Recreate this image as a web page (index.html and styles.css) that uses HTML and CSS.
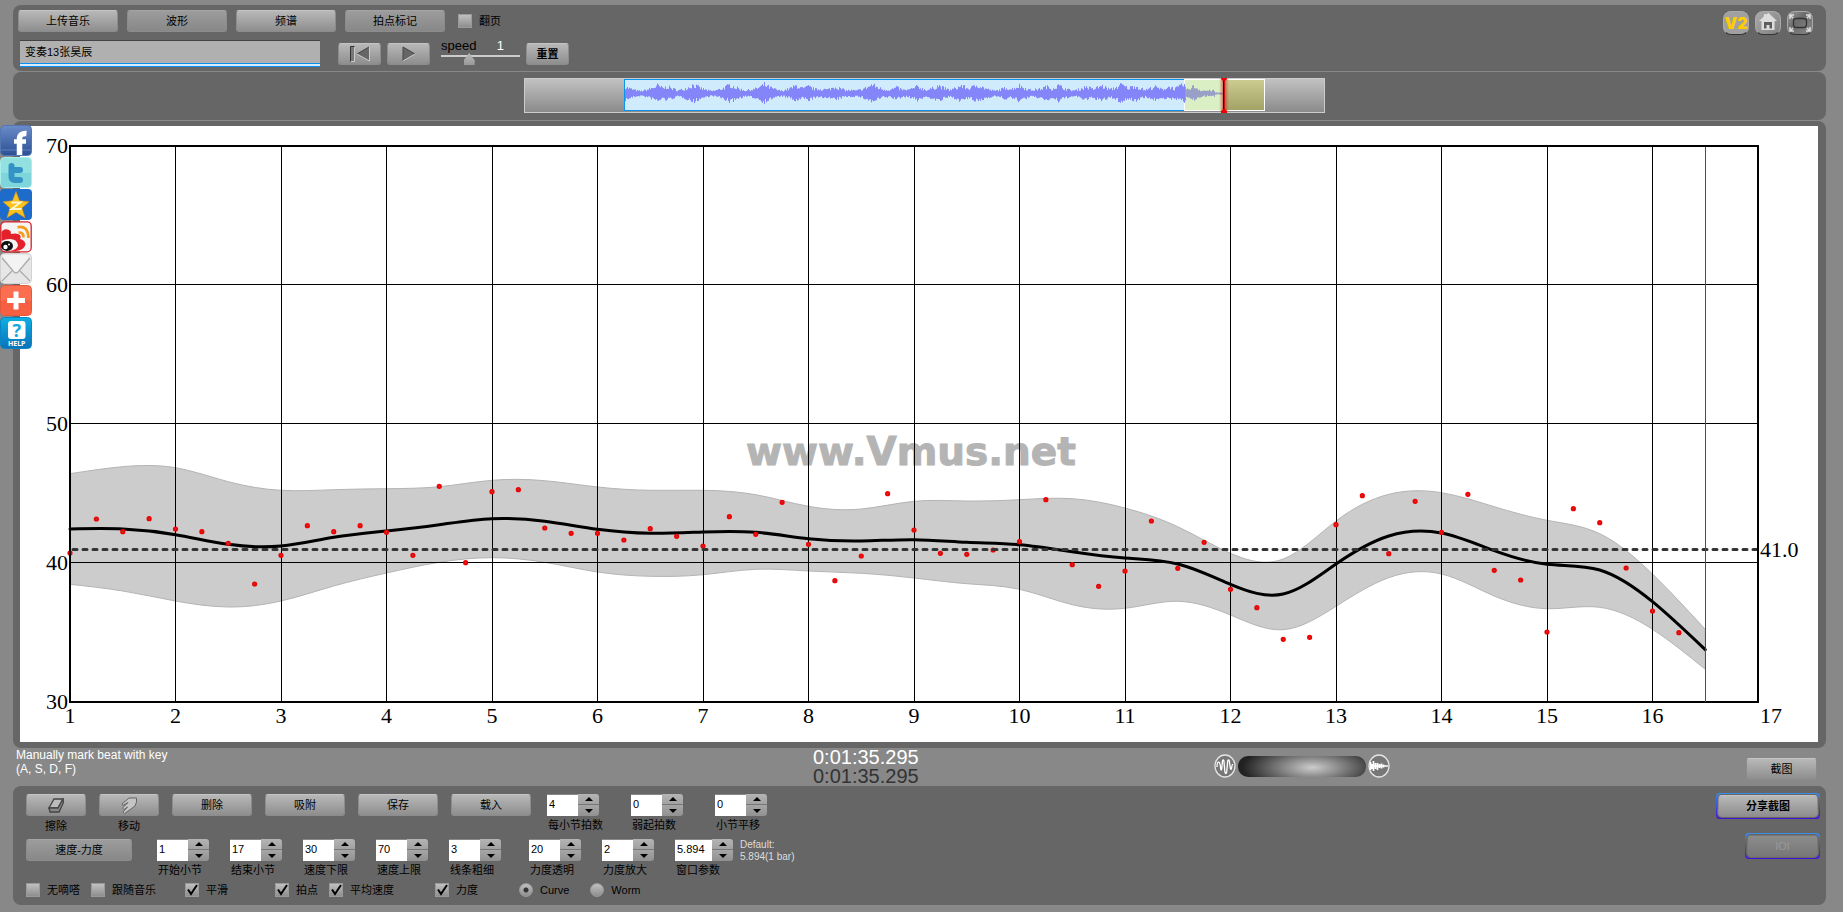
FILE: index.html
```html
<!DOCTYPE html>
<html lang="zh-CN">
<head>
<meta charset="utf-8">
<title>Vmus.net</title>
<link rel="stylesheet" href="styles.css">
</head>
<body>
<header class="panel toolbar">
  <div class="toolbar-main">
    <div class="row tabs">
      <button class="btn w100">上传音乐</button>
      <button class="btn w100 pressed">波形</button>
      <button class="btn w100">频谱</button>
      <button class="btn w100 pressed">拍点标记</button>
      <label class="check"><input type="checkbox"><span>翻页</span></label>
    </div>
    <div class="row player">
      <input class="track-name" type="text" value="变奏13张昊辰" aria-label="曲目">
      <button class="btn w43" aria-label="返回开头">
        <svg width="20" height="16" viewBox="0 0 20 16"><path fill="#777" d="M.5 .5h4v15h-4z"/><path d="M.5 15.500V.5h4" stroke="#333" fill="none"/><path fill="#666" d="M19 1v14L7 8z"/><path d="M19 1 7 8" stroke="#444"/><path d="M4.500 1v14.500H1M7 8l12.500 7V1" stroke="#ccc" fill="none"/></svg>
      </button>
      <button class="btn w43" aria-label="播放">
        <svg width="14" height="16" viewBox="0 0 14 16"><path fill="#666" d="M1 1v14l12-7z"/><path d="M13 8 1 1v14" stroke="#444" fill="none"/><path d="m1 15 12-7" stroke="#ccc"/></svg>
      </button>
      <div class="speed">
        <div class="speed-head"><label for="speed">speed</label><output for="speed">1</output></div>
        <input id="speed" type="range" min="0" max="3" step="0.1" value="1">
      </div>
      <button class="btn w43 strong">重置</button>
    </div>
  </div>
  <div class="toolbar-links">
    <a class="tile v2" href="#">V2</a>
    <a class="tile" href="#" aria-label="Home"><svg viewBox="0 0 26 24"><path fill="#ddd" d="M13 1.500 22 10h-2.500v9h-13v-9H4l5-4.700V3h2.500v1z"/><path fill="#5c5c5c" d="M9 17.500V11h8v6.500h-2.500V14h-3v3.500z"/></svg></a>
    <a class="tile dim" href="#" aria-label="Fullscreen"><svg viewBox="0 0 26 24" fill="none"><rect x="6.500" y="7.500" width="13" height="9" rx="3" stroke="#333" stroke-width="1.300"/><path stroke="#ddd" stroke-width="1.500" d="M3 8V4h4M3 4l3 3M19 4h4v4m0-4-3 3M3 16v4h4m-4 0 3-3m13 3h4v-4m0 4-3-3"/></svg></a>
  </div>
</header>

<section class="panel overview-panel">
  <svg id="overview" class="overview" viewBox="0 0 801 35" role="img" aria-label="波形">
    <defs>
      <linearGradient id="gGray" x2="0" y2="1"><stop stop-color="#c2c2c2"/><stop offset="1" stop-color="#8a8a8a"/></linearGradient>
      <linearGradient id="gOlive" x2="0" y2="1"><stop stop-color="#cccc92"/><stop offset="1" stop-color="#a2a266"/></linearGradient>
      <linearGradient id="gRed" x2="1" y2="0"><stop stop-color="#d44" stop-opacity="0"/><stop offset=".5" stop-color="#b22"/><stop offset="1" stop-color="#d44" stop-opacity="0"/></linearGradient>
    </defs>
    <rect x=".5" y=".5" width="800" height="34" fill="url(#gGray)" stroke="#ccc"/>
    <rect x="100.500" y="1.500" width="560" height="31" fill="#cfebfc" stroke="#0a94f0"/>
    <rect x="660.500" y="1.500" width="80" height="31" fill="url(#gOlive)" stroke="#fff"/>
    <rect x="661" y="2" width="40" height="30" fill="#daf0c4"/>
    <path id="wave" fill="none" stroke="#8585fa"/>
    <path id="waveTail" fill="none" stroke="#98a0c8"/>
    <rect x="695" y="1" width="10" height="32" fill="url(#gRed)" opacity=".75"/>
    <path stroke="#111" d="M699.500 1v32"/><path stroke="#c11" d="M700.500 1v32"/>
    <path fill="#e00" d="M697 0h6v1l-2 2h-2l-2-2zM697 35h6v-2l-2-2h-2l-2 2z"/>
  </svg>
</section>

<main class="panel chart-panel">
  <nav class="social">
    <a href="#" aria-label="Facebook"><svg viewBox="0 0 32 32"><defs><linearGradient id="fb" x2="0" y2="1"><stop stop-color="#6b8cc8"/><stop offset="1" stop-color="#2c4f94"/></linearGradient></defs><rect x=".5" y=".5" width="31" height="30" rx="4" fill="url(#fb)" stroke="#5376b4"/><path d="M1 25h30" stroke="#5d80bf"/><path fill="none" stroke="#fff" stroke-width="5.500" d="M19.500 30V14q0-6 7-5.500"/><path stroke="#fff" stroke-width="4.500" d="M14 16.500h12"/></svg></a>
    <a href="#" aria-label="Twitter"><svg viewBox="0 0 32 32"><rect x=".5" y=".5" width="31" height="30" rx="4" fill="#93e0e0" stroke="#a8efec"/><path d="M1 16h30v11q0 3-3 3H4q-3 0-3-3z" fill="#7fd6da"/><path fill="none" stroke="#3592c5" stroke-width="6" stroke-linecap="round" stroke-linejoin="round" d="M11.500 9v10.500q0 3.500 3.500 3.500h5M12 13h8"/></svg></a>
    <a href="#" aria-label="QZone"><svg viewBox="0 0 32 32"><rect y="0" width="32" height="31" rx="4" fill="#1d6ccb"/><path fill="#fbc21c" stroke="#d98c12" stroke-width=".6" d="m16 2.500 3.500 9.200 9.500 1-7 6.200 3 9.800-9-5.500-9 5.500 3-9.800-7-6.200 9.500-1z"/><path d="M11.500 13.500h9l-9 6.500h10" fill="none" stroke="#fff8d0" stroke-width="1.800"/></svg></a>
    <a href="#" aria-label="Weibo"><svg viewBox="0 0 32 32"><rect x=".8" y=".8" width="30.400" height="30" rx="4" fill="#f4f4f4" stroke="#d8202a" stroke-width="1.300"/><path fill="#e4202a" d="M1.500 20V11q1-2 3-2.500 3-1 6 1.500l.5 3q6-1.500 9 1 1.500 2 0 4 5 1 5.500 5.500Q24 29 16 30H9q9-1 9-6-1-6-8-6-5 0-8.500 2z"/><ellipse cx="7" cy="25" rx="6" ry="5" fill="#111"/><circle cx="5.500" cy="26" r="2.200" fill="#fff"/><circle cx="9" cy="23.500" r="1" fill="#fff"/><path fill="none" stroke="#f59a1a" stroke-width="2.600" d="M17.500 6.200Q28 4 28.500 17M18.500 11.500q5-.5 5 5"/></svg></a>
    <a href="#" aria-label="Mail"><svg viewBox="0 0 32 32"><rect x=".5" y=".5" width="31" height="30" rx="4" fill="#e6e6e6" stroke="#d2d2d2"/><path fill="#f3f3f3" d="M2 2h28L17 20h-2z"/><path fill="none" stroke="#aaa" stroke-width="1.200" d="m2 5 12 14q2 2 4 0L30 5M2 28l10-10m18 10-10-10"/></svg></a>
    <a href="#" aria-label="Share"><svg viewBox="0 0 32 32"><rect x=".5" y=".5" width="31" height="30" rx="4" fill="#fb6e50" stroke="#e4583c"/><path d="M1 16Q16 12 31 16v11q0 3-3 3H4q-3 0-3-3z" fill="#f65f42"/><path d="M16 6.500v18M7 15.500h18" stroke="#fff" stroke-width="5"/></svg></a>
    <a href="#" aria-label="Help"><svg viewBox="0 0 32 32"><defs><linearGradient id="hp" x2="0" y2="1"><stop stop-color="#0cb0e4"/><stop offset="1" stop-color="#0b72b8"/></linearGradient></defs><rect x=".5" y=".5" width="31" height="31" rx="4" fill="url(#hp)" stroke="#0a86c8"/><rect x="8" y="4" width="17.500" height="18" rx="3" fill="#fff"/><text class="help-mark" x="16.700" y="19.500" text-anchor="middle">?</text><text class="help-word" x="16.700" y="29" text-anchor="middle">HELP</text></svg></a>
  </nav>
  <svg id="chart" class="chart" viewBox="20 126 1798 616" role="img" aria-label="速度-力度">
    <path id="band" fill="#ccc" stroke="#b4b4b4"/>
    <text class="watermark" x="911" y="465" text-anchor="middle">www.Vmus.net</text>
    <path id="mean" fill="none" stroke="#000" stroke-width="3" stroke-linecap="round"/>
    <g id="grid" stroke="#000" shape-rendering="crispEdges"></g>
    <g id="dots"></g>
    <path stroke="#333" stroke-width="3" stroke-dasharray="4 6" stroke-linecap="round" d="M73 549.500H1757"/>
    <rect x="70" y="146" width="1688" height="556" fill="none" stroke="#000" stroke-width="2" shape-rendering="crispEdges"/>
    <path stroke="#e01010" d="M1705.500 147v555"/>
    <g id="labels" class="axis"></g>
    <text class="axis" x="1760" y="557">41.0</text>
  </svg>
</main>

<section class="status">
  <p class="hint">Manually mark beat with key<br>(A, S, D, F)</p>
  <div class="clock"><time>0:01:35.295</time><time class="echo">0:01:35.295</time></div>
  <div class="volume">
    <svg width="22" height="24" viewBox="0 0 22 24" fill="none" stroke="#e4e4e4"><ellipse cx="11" cy="12" rx="10" ry="11" fill="#777" stroke-width="1.300"/><path stroke="#fff" stroke-width="1.300" d="M3 13q0-5 1.500-5t2 5 1.200 2L8.500 7q.7-2 1.400 0l1 11q.9 3 1.800 0l1-11q.8-2 1.600 0l1 7q1 3 1.500-1 .2-3 1.200-2"/></svg>
    <input type="range" aria-label="音量">
    <svg width="22" height="24" viewBox="0 0 22 24"><ellipse cx="11" cy="12" rx="10" ry="11" fill="#777" stroke="#e4e4e4" stroke-width="1.300"/><path stroke="#fff" d="M2.500 8v8M4 10v5M5.500 7v10M7.500 9v6M9.500 9v7M11.500 10v4M13.500 9.500v5M15.500 10.500v3M2 12h18" stroke-width="1.700"/></svg>
  </div>
  <button class="btn w71">截图</button>
</section>

<footer class="panel controls">
  <div class="control-rows">
    <div class="row tools">
      <div class="tool"><button class="btn w60" id="erase" aria-label="擦除"><svg width="18" height="15" viewBox="0 0 18 15"><path fill="#bbb" stroke="#444" stroke-width="1.300" d="M7 1h9l-5 9H2z"/><path fill="#888" stroke="#444" stroke-width="1.300" d="M2 10h9l5-9 .5 3.500L12 14H3z"/></svg></button><label for="erase">擦除</label></div>
      <div class="tool"><button class="btn w60" id="move" aria-label="移动"><svg width="18" height="17" viewBox="0 0 18 17"><path fill="#c4c4c4" stroke="#666" d="M16.500 1H9L2 7l1 1.500L8 5.500 2.500 11 4 12.500 7.500 10 3 15l1.500 1.500L11 12l4-3 1.500-4z"/></svg></button><label for="move">移动</label></div>
      <button class="btn w80">删除</button>
      <button class="btn w80">吸附</button>
      <button class="btn w80">保存</button>
      <button class="btn w80">载入</button>
      <div class="fields loose">
        <div class="field"><div class="stepper"><input type="text" id="f1" value="4"><button class="up" aria-label="+"></button><button class="down" aria-label="-"></button></div><label for="f1">每小节拍数</label></div>
        <div class="field"><div class="stepper"><input type="text" id="f2" value="0"><button class="up" aria-label="+"></button><button class="down" aria-label="-"></button></div><label for="f2">弱起拍数</label></div>
        <div class="field"><div class="stepper"><input type="text" id="f3" value="0"><button class="up" aria-label="+"></button><button class="down" aria-label="-"></button></div><label for="f3">小节平移</label></div>
      </div>
    </div>
    <div class="row params">
      <button class="btn w106 pressed">速度-力度</button>
      <div class="fields">
        <div class="field"><div class="stepper"><input type="text" id="f4" value="1"><button class="up" aria-label="+"></button><button class="down" aria-label="-"></button></div><label for="f4">开始小节</label></div>
        <div class="field"><div class="stepper"><input type="text" id="f5" value="17"><button class="up" aria-label="+"></button><button class="down" aria-label="-"></button></div><label for="f5">结束小节</label></div>
        <div class="field"><div class="stepper"><input type="text" id="f6" value="30"><button class="up" aria-label="+"></button><button class="down" aria-label="-"></button></div><label for="f6">速度下限</label></div>
        <div class="field"><div class="stepper"><input type="text" id="f7" value="70"><button class="up" aria-label="+"></button><button class="down" aria-label="-"></button></div><label for="f7">速度上限</label></div>
        <div class="field"><div class="stepper"><input type="text" id="f8" value="3"><button class="up" aria-label="+"></button><button class="down" aria-label="-"></button></div><label for="f8">线条粗细</label></div>
      </div>
      <div class="fields">
        <div class="field"><div class="stepper"><input type="text" id="f9" value="20"><button class="up" aria-label="+"></button><button class="down" aria-label="-"></button></div><label for="f9">力度透明</label></div>
        <div class="field"><div class="stepper"><input type="text" id="f10" value="2"><button class="up" aria-label="+"></button><button class="down" aria-label="-"></button></div><label for="f10">力度放大</label></div>
        <div class="field wide"><div class="stepper"><input type="text" id="f11" value="5.894"><button class="up" aria-label="+"></button><button class="down" aria-label="-"></button></div><label for="f11">窗口参数</label></div>
      </div>
      <p class="default">Default:<br>5.894(1 bar)</p>
    </div>
    <div class="row options">
      <label class="check"><input type="checkbox"><span>无嘀嗒</span></label>
      <label class="check"><input type="checkbox"><span>跟随音乐</span></label>
      <label class="check gap-m"><input type="checkbox" checked><span>平滑</span></label>
      <label class="check gap-l"><input type="checkbox" checked><span>拍点</span></label>
      <label class="check"><input type="checkbox" checked><span>平均速度</span></label>
      <label class="check gap-n"><input type="checkbox" checked><span>力度</span></label>
      <label class="check gap-n"><input type="radio" name="style" checked><span>Curve</span></label>
      <label class="check gap-s"><input type="radio" name="style"><span>Worm</span></label>
    </div>
  </div>
  <div class="share">
    <div class="glow"><button class="btn w100 strong">分享截图</button></div>
    <div class="glow"><button class="btn w71 off" disabled>IOI</button></div>
  </div>
</footer>
<script src="script.js"></script>
</body>
</html>
```

FILE: styles.css
```css
* { box-sizing: border-box; }

body {
  margin: 0;
  padding: 5px 17px 7px 13px;
  background: #888;
  color: #000;
  font: 11px/14px "Liberation Sans", "Noto Sans CJK SC", sans-serif;
}

button, input, output { font: inherit; color: inherit; }
p { margin: 0; }
a { color: inherit; text-decoration: none; }

.panel { background: #666; border-radius: 8px; }
.row { display: flex; }

/* Buttons */
.btn {
  display: flex;
  align-items: center;
  justify-content: center;
  flex: none;
  height: 22px;
  padding: 0;
  border: 1px solid #8c8c8c;
  border-top-color: #c4c4c4;
  border-radius: 3px;
  background: linear-gradient(#b8b8b8, #8e8e8e);
}
.pressed { background: linear-gradient(#9c9c9c, #888); border-color: #8c8c8c; border-top-color: #a4a4a4; }
.strong { font-weight: bold; }
.off { background: linear-gradient(#8c8c8c, #777); border-color: #777; color: #999; }
.w43 { width: 43px; }
.w60 { width: 60px; }
.w71 { width: 71px; }
.w80 { width: 80px; }
.w100 { width: 100px; }
.w106 { width: 106px; }

/* Check boxes and radios */
.check { display: flex; align-items: center; gap: 7px; white-space: nowrap; }
.check input {
  appearance: none;
  flex: none;
  width: 14px;
  height: 14px;
  margin: 0;
  border: 1px solid #9a9a9a;
  background: linear-gradient(#c0c0c0, #8e8e8e);
}
.check input[type="checkbox"]:checked {
  background: url('data:image/svg+xml,<svg xmlns="http://www.w3.org/2000/svg" viewBox="0 0 12 12"><path d="M2 5.500 5 10 11 1" fill="none" stroke="black" stroke-width="2"/></svg>') center / 12px 12px no-repeat, linear-gradient(#c0c0c0, #8e8e8e);
}
.check input[type="radio"] { border-radius: 50%; }
.check input[type="radio"]:checked { background: radial-gradient(circle, #333 2px, transparent 3px), linear-gradient(#c0c0c0, #8e8e8e); }

/* Toolbar */
.toolbar { display: flex; justify-content: space-between; padding: 5px 13px 4px 5px; }
.toolbar-main { display: grid; gap: 8px; }
.tabs { gap: 9px; }
.tabs .check { margin-left: 4px; }
.player { align-items: center; gap: 6px; padding-left: 2px; }
.track-name {
  width: 300px;
  height: 27px;
  margin-right: 12px;
  padding: 0 5px 6px;
  border: 0;
  border-top: 1px solid #444;
  background: #b0b0b0;
  box-shadow: inset 0 -1px #0a90f0, inset 0 -3px #d8ecfa, inset 0 -4px #0a90f0;
}
.speed { display: flex; flex-direction: column; width: 79px; height: 27px; margin-left: 5px; }
.speed-head { display: flex; justify-content: space-between; padding-right: 16px; font-size: 13px; line-height: 12px; }
.speed-head output { color: #fff; }
.speed input {
  appearance: none;
  width: 79px;
  height: 14px;
  margin: 0;
  background: linear-gradient(#ccc, #ccc) 0 3px / 100% 2px no-repeat;
}
.speed input::-webkit-slider-thumb {
  appearance: none;
  width: 11px;
  height: 12px;
  background: linear-gradient(#bbb, #999);
  clip-path: polygon(50% 0, 100% 60%, 100% 100%, 0 100%, 0 60%);
}
.toolbar-links { display: flex; gap: 6px; padding-top: 1px; }
.tile {
  display: flex;
  align-items: center;
  justify-content: center;
  width: 26px;
  height: 24px;
  border-radius: 8px;
  border: 1px solid #aaa;
  border-bottom-color: #333;
  background: linear-gradient(135deg, #aaa, #808080);
}
.tile.dim { background: linear-gradient(135deg, #999, #6c6c6c 40%, #888); }
.tile svg { width: 26px; height: 24px; flex: none; }
.v2 { background: #a0a0a0; color: #fc0; font: 900 16px/22px "Inter", sans-serif; }

/* Overview */
.overview-panel { display: flex; justify-content: center; margin-top: 1px; padding: 6px 0 7px 9px; }
.overview { display: block; width: 801px; height: 35px; }

/* Chart */
.chart-panel { position: relative; margin-top: 1px; padding: 5px 8px 6px 7px; }
.chart { display: block; width: 100%; background: #fff; }
.axis { font: 22px "Liberation Serif", serif; }
.watermark { font: bold 39px "DejaVu Sans", sans-serif; fill: #b4b4b4; stroke: #b4b4b4; stroke-width: 1px; }
.social { position: absolute; left: -13px; top: 4px; display: grid; }
.social svg { display: block; width: 32px; height: 32px; }
.help-mark { font: bold 18px "Noto Sans", sans-serif; fill: #19a8dc; }
.help-word { font: bold 7px "Noto Sans", sans-serif; fill: #fff; }

/* Status strip */
.status { display: grid; grid-template-columns: 800px auto 1fr auto; height: 38px; padding-right: 9px; }
.hint { padding-left: 3px; color: #fff; font-size: 12px; }
.clock { display: flex; flex-direction: column; color: #fff; font-size: 20px; line-height: 19px; }
.clock .echo { color: #333; }
.volume { display: flex; align-items: center; gap: 2px; padding-left: 295px; height: 36px; }
.volume input {
  appearance: none;
  width: 128px;
  height: 21px;
  margin: 0;
  border-radius: 10px;
  background: radial-gradient(ellipse 70px 24px at 58% 55%, #ccc, #555 70%, #222);
}
.volume input::-webkit-slider-thumb { appearance: none; width: 1px; height: 1px; }
.status .btn { margin-top: 10px; }

/* Bottom controls */
.controls { display: flex; justify-content: space-between; padding: 8px 6px 8px 13px; }
.control-rows { display: flex; flex-direction: column; }
.tools { gap: 13px; height: 45px; }
.tool { display: grid; justify-items: center; align-content: start; gap: 3px; }
.fields { display: flex; gap: 21px; }
.fields.loose { gap: 32px; margin-left: 3px; }
.field { width: 52px; white-space: nowrap; }
.field.wide { width: 58px; }
.field label { display: block; padding: 2px 0 0 1px; }
.stepper {
  display: grid;
  grid-template-columns: 1fr 21px;
  grid-template-rows: 11px 11px;
}
.stepper input {
  grid-row: 1 / 3;
  width: 100%;
  min-width: 0;
  padding: 0 0 4px 2px;
  border: 0;
  border-top: 1px solid #888;
  background: #fff;
}
.stepper button { display: grid; place-items: center; padding: 0; border: 0; background: #a6a6a6; }
.stepper .up { border-bottom: 1px solid #777; border-radius: 0 3px 0 0; background: linear-gradient(#b4b4b4, #a2a2a2); }
.stepper .down { border-radius: 0 0 3px 0; background: linear-gradient(#a6a6a6, #919191); }
.stepper button::before { content: ""; border: 4px solid transparent; border-top-width: 0; border-bottom-color: #000; }
.stepper .down::before { border-width: 4px 4px 0; border-color: #000 transparent; }
.params { gap: 28px; height: 44px; }
.params > .btn { margin-right: -3px; }
.default { margin-left: -21px; color: #ddd; font-size: 10px; line-height: 12px; }
.options { gap: 11px; }
.gap-s { margin-left: 10px; }
.gap-m { margin-left: 18px; }
.gap-n { margin-left: 30px; }
.gap-l { margin-left: 36px; }
.share { display: flex; flex-direction: column; align-items: flex-end; gap: 14px; margin-top: -1px; }
.glow {
  padding: 2px;
  border-radius: 4px;
  background: linear-gradient(#3a90e8, #4010d8);
}
.glow .btn { outline: 1px solid #666; outline-offset: 0; }
```

FILE: script.js
```js
const START = 70, BAR = 105.5;
const xOf = bar => START + (bar - 1) * BAR;
const $ = id => document.getElementById(id);

/* Half-bar samples of the band edges and of the tempo curve */
const upper = [473.7,466.7,467.7,481.7,490.3,489.7,488.7,486.7,480.3,480.7,487,490.3,490.3,494.7,506.3,509,501.3,501,499.7,498.7,508,526.7,553.3,559,521,494.3,492.7,506.7,520.3,533.7,574,629.3];
const mean = [529,529,534.7,544.3,546,537.3,531,524.7,518.7,521.3,529.3,533.3,532,532.3,538.7,541,539.7,542.3,544.7,551.7,558,564,584.3,594,564,536,533,550.7,564.3,570,601.7,649.7];
const lower = [584.3,591,601,607,601,586,573,562.3,557.7,562.3,572,576.3,574.7,569.3,571,573.3,578,583.7,589.3,604.7,608.3,601.3,615,629.7,606.3,577.7,574,596,608.7,607.3,629.3,669.3];
/* Quarter-bar beat marks */
const beats = [553,519,531.7,518.7,529,531.7,543.3,584,555.3,525.7,531.7,525.7,532.3,555.3,486.3,562.7,491.7,489.7,528,533.3,533.3,540,528.7,536.3,546,516.7,534.3,502.3,544.3,580.7,556,493.7,530,553.3,554.3,550,541.7,499.7,564.7,586.3,571,521,568.3,542.3,589.3,607.7,639.3,637.3,524.7,495.7,553.7,501.3,532.3,494.3,570.3,580,632,508.7,522.7,568,611,632.7];

const points = ys => ys.map((y, i) => [xOf(1 + i / 2), y]);

/* Natural cubic spline through evenly spaced points */
function spline(p) {
  const n = p.length, y = p.map(q => q[1]);
  const c = [], r = [], m = [];
  c[0] = 0.5;
  r[0] = 1.5 * (y[1] - y[0]);
  for (let i = 1; i < n; i++) {
    const last = i === n - 1;
    const diag = (last ? 2 : 4) - c[i - 1];
    c[i] = 1 / diag;
    r[i] = (3 * (last ? y[i] - y[i - 1] : y[i + 1] - y[i - 1]) - r[i - 1]) / diag;
  }
  m[n - 1] = r[n - 1];
  for (let i = n - 2; i >= 0; i--) m[i] = r[i] - c[i] * m[i + 1];
  let d = `${p[0][0]} ${y[0]}`;
  for (let i = 0; i < n - 1; i++) {
    const h = (p[i + 1][0] - p[i][0]) / 3;
    d += `C${p[i][0] + h} ${y[i] + m[i] / 3} ${p[i + 1][0] - h} ${y[i + 1] - m[i + 1] / 3} ${p[i + 1][0]} ${y[i + 1]}`;
  }
  return d;
}

$('mean').setAttribute('d', 'M' + spline(points(mean)));
$('band').setAttribute('d', 'M' + spline(points(upper)) + 'L' + spline(points(lower).reverse()) + 'Z');

let grid = '', labels = '';
for (let bar = 2; bar <= 16; bar++) grid += `<path d="M${Math.floor(xOf(bar)) + 0.5} 147V701"/>`;
for (const y of [284.5, 423.5, 562.5]) grid += `<path d="M71 ${y}H1757"/>`;
for (let bar = 1; bar <= 16; bar++) labels += `<text x="${xOf(bar)}" y="723" text-anchor="middle">${bar}</text>`;
labels += '<text x="1760" y="723">17</text>';
[70, 60, 50, 40, 30].forEach((v, i) => { labels += `<text x="68" y="${153 + i * 139}" text-anchor="end">${v}</text>`; });
$('grid').innerHTML = grid;
$('labels').innerHTML = labels;
$('dots').innerHTML = beats.map((y, i) =>
  `<circle cx="${xOf(1 + i / 4)}" cy="${y}" r="1.700" fill="#a44" stroke="#f00000" stroke-width="1.800"/>`).join('');

/* Overview waveform: loudness envelope with a fixed jitter */
const swells = [[12,5],[35,9],[71,8],[81,7],[107,9],[144,9],[178,9],[210,8],[222,7],[249,7],[286,9],[310,6],[331,7],[352,8],[375,8],[391,9],[420,6],[433,8],[460,7],[472,8],[500,7],[515,8],[535,9],[548,8],[568,7],[583,7],[597,9]];
let seed = 7;
const rnd = () => (seed = (seed * 16807) % 2147483647) / 2147483647;
let main = '', tail = '';
for (let x = 101; x < 699; x++) {
  let amp = 3 + 1.5 * Math.sin(x / 7) * Math.sin(x / 17);
  for (const [cx, a] of swells) amp = Math.max(amp, a * Math.exp(-Math.abs((x - 62 - cx) / 14)));
  if (x > 661) amp = x > 690 ? 1 : 3 + 4 * Math.exp(-(((x - 669) / 5) ** 2));
  const up = amp * (0.6 + 0.7 * rnd()), down = amp * (0.6 + 0.6 * rnd());
  const seg = `M${x + 0.5} ${15.5 - up}V${15.5 + down}`;
  if (x > 660) tail += seg; else main += seg;
}
$('wave').setAttribute('d', main);
$('waveTail').setAttribute('d', tail);
```
